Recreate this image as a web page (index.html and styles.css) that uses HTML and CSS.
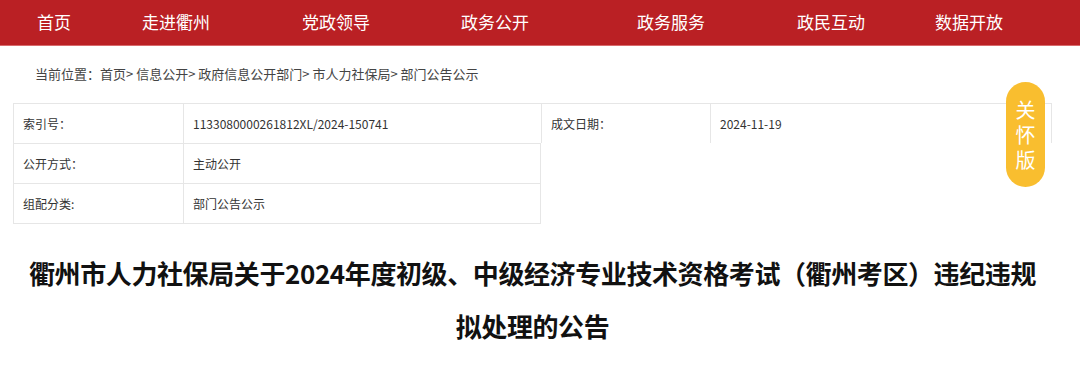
FILE: index.html
```html
<!DOCTYPE html>
<html>
<head>
  <meta charset="utf-8">
  <title>部门公告公示</title>
  <link rel="stylesheet" href="styles.css">
</head>
<body>
  <div class="nav">
    <a href="#">首页</a>
    <a href="#">走进衢州</a>
    <a href="#">党政领导</a>
    <a href="#">政务公开</a>
    <a href="#">政务服务</a>
    <a href="#">政民互动</a>
    <a href="#">数据开放</a>
  </div>

  <div class="main">
    <div class="crumb">当前位置：首页&gt; 信息公开&gt; 政府信息公开部门&gt; 市人力社保局&gt; 部门公告公示</div>

    <div class="info">
      <div class="info-row">
        <div class="cell label">索引号：</div>
        <div class="cell value">1133080000261812XL/2024-150741</div>
        <div class="cell label2">成文日期：</div>
        <div class="cell value2">2024-11-19</div>
      </div>
      <div class="info-row half">
        <div class="cell label">公开方式：</div>
        <div class="cell value">主动公开</div>
      </div>
      <div class="info-row half">
        <div class="cell label">组配分类:</div>
        <div class="cell value">部门公告公示</div>
      </div>
    </div>

    <h1 class="title">衢州市人力社保局关于2024年度初级、中级经济专业技术资格考试（衢州考区）违纪违规拟处理的公告</h1>
  </div>

  <a href="#" class="care-btn">关怀版</a>
</body>
</html>
```

FILE: styles.css
```css
body {
  margin: 0;
  font-family: "Noto Sans CJK SC", "Noto Sans", sans-serif;
  color: #333;
  background: #fff;
}
.nav {
  display: grid;
  grid-template-columns: 105px 160px 159px 176px 160px 138px auto;
  height: 45px;
  padding-left: 37px;
  background: #ba2024;
  border-bottom: 1px solid #d96a6c;
}
.nav a {
  color: #fff;
  text-decoration: none;
  font-size: 17px;
  line-height: 43px;
  white-space: nowrap;
}
.main {
  width: 1039px;
  margin-left: 13px;
  border-bottom: 2px solid #e8e8e8;
}
.crumb {
  font-size: 13px;
  color: #444;
  padding: 19px 0 0 22px;
  height: 40px;
  line-height: 18px;
  box-sizing: border-box;
}
.info {
  margin-top: 17px;
  font-size: 12px;
  color: #333;
}
.info-row {
  display: flex;
  height: 40px;
  border: 1px solid #e6e6e6;
  border-bottom: none;
  box-sizing: border-box;
}
.info-row.half {
  width: 528px;
}
.info-row.half:last-child {
  border-bottom: 1px solid #e6e6e6;
  height: 41px;
}
.cell {
  line-height: 39px;
  padding-left: 9px;
  box-sizing: border-box;
}
.label {
  width: 170px;
  border-right: 1px solid #e6e6e6;
}
.value {
  width: 357px;
}
.label2 {
  width: 170px;
  border-left: 1px solid #e6e6e6;
  border-right: 1px solid #e6e6e6;
}
.value2 {
  flex: 1;
}
.info-row.half .value {
  width: 356px;
}
.title {
  margin: 0;
  padding: 22px 9px 18px;
  font-size: 26px;
  font-weight: bold;
  letter-spacing: -0.4px;
  color: #111;
  line-height: 53px;
  text-align: center;
}
.care-btn {
  position: absolute;
  top: 82px;
  left: 1006px;
  width: 39px;
  height: 105px;
  box-sizing: border-box;
  padding-top: 15px;
  border-radius: 20px;
  background: #f9be2f;
  color: #fff;
  text-decoration: none;
  font-size: 20px;
  line-height: 25px;
  text-align: center;
}
```
